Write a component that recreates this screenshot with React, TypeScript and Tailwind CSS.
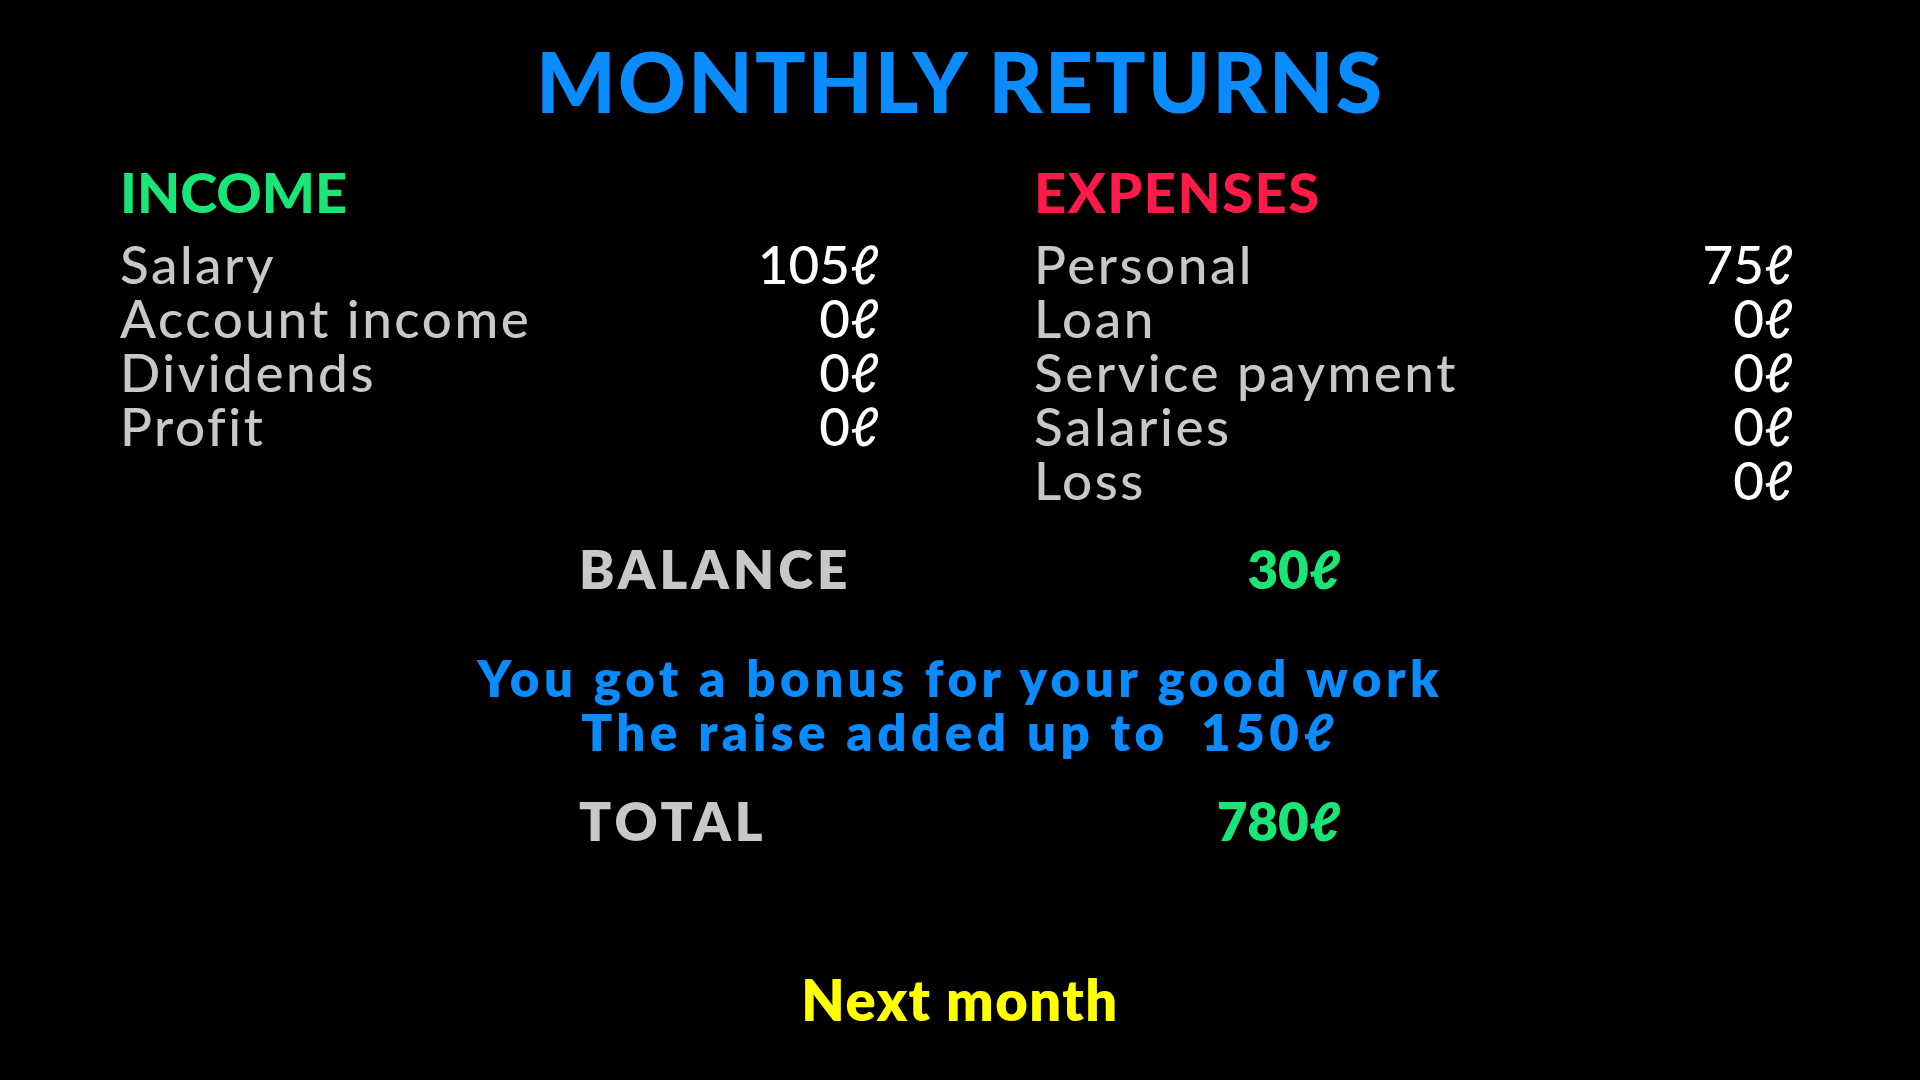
import React from "react";

const income: [string, string][] = [
  ["Salary", "105ℓ"],
  ["Account income", "0ℓ"],
  ["Dividends", "0ℓ"],
  ["Profit", "0ℓ"],
];

const expenses: [string, string][] = [
  ["Personal", "75ℓ"],
  ["Loan", "0ℓ"],
  ["Service payment", "0ℓ"],
  ["Salaries", "0ℓ"],
  ["Loss", "0ℓ"],
];

function Column({ title, titleClass, rows }: { title: string; titleClass: string; rows: [string, string][] }) {
  return (
    <div className="w-[759px] flex flex-col">
      <div className={`text-[56px] leading-[56px] font-black ${titleClass}`}>{title}</div>
      <div className="mt-[17px] flex flex-col">
        {rows.map(([label, value]) => (
          <div key={label} className="flex justify-between text-[53px] leading-[54px]">
            <span className="text-[#c8c8c8] font-medium tracking-[2.5px]">{label}</span>
            <span className="text-white font-medium">{value}</span>
          </div>
        ))}
      </div>
    </div>
  );
}

export default function App() {
  return (
    <div className="w-[1920px] h-[1080px] bg-black overflow-hidden font-['Lato','Noto_Sans',sans-serif] flex flex-col">
      <h1 className="pt-[39px] text-center text-[84px] leading-[84px] font-black tracking-[2px] text-[#0a8cff]">
        MONTHLY RETURNS
      </h1>
      <div className="mt-[41px] flex pl-[120px] gap-[155px]">
        <Column title="INCOME" titleClass="text-[#19e677]" rows={income} />
        <Column title="EXPENSES" titleClass="text-[#ff1a4a] tracking-[1.5px]" rows={expenses} />
      </div>
      <div className="mt-[35px] mx-auto w-[762px] pl-0 flex justify-between text-[53px] leading-[54px] font-extrabold">
        <span className="text-[#c8c8c8] tracking-[4px]">BALANCE</span>
        <span className="text-[#19e677]">30ℓ</span>
      </div>
      <div className="mt-[55px] text-center text-[51px] leading-[54px] font-extrabold tracking-[4.5px] text-[#0a8cff] whitespace-pre">
        <div>You got a bonus for your good work</div>
        <div>{"The raise added up to  150ℓ"}</div>
      </div>
      <div className="mt-[35px] mx-auto w-[762px] flex justify-between text-[53px] leading-[54px] font-extrabold">
        <span className="text-[#c8c8c8] tracking-[4px]">TOTAL</span>
        <span className="text-[#19e677]">780ℓ</span>
      </div>
      <div className="mt-[124px] text-center text-[56px] leading-[56px] font-extrabold tracking-[1.5px] text-[#ffff00]">
        Next month
      </div>
    </div>
  );
}
